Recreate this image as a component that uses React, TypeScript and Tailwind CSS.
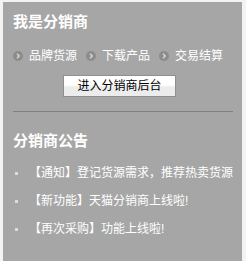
const font = "font-['Liberation_Sans','Noto_Sans_CJK_SC',sans-serif]";

function Arrow() {
  return (
    <svg width="10" height="10" viewBox="0 0 10 10" className="shrink-0">
      <circle cx="5" cy="5" r="5" fill="#8c8c8c" />
      <path d="M4 2.8 L6.2 5 L4 7.2" fill="none" stroke="#d8d8d8" strokeWidth="1.4" />
    </svg>
  );
}

const links = ["品牌货源", "下载产品", "交易结算"];
const notices = [
  ["【通知】", "登记货源需求，推荐热卖货源"],
  ["【新功能】", "天猫分销商上线啦!"],
  ["【再次采购】", "功能上线啦!"],
];

export default function App() {
  return (
    <div className={`h-[261px] w-[246px] overflow-hidden bg-[#f3f3f3] pl-[3px] pt-[2px] ${font}`}>
      <div className="h-[259px] w-[239px] bg-[#a6a6a6] px-[10px] pt-[10px] text-white">
        <h3 className="text-[15px] font-bold leading-[20px]">我是分销商</h3>
        <div className="mt-[16px] flex h-[16px] items-center">
          {links.map((l, i) => (
            <a key={l} className={`flex items-center gap-[6px] text-[12px] leading-[16px] ${i > 0 ? "ml-[9px]" : ""}`}>
              <Arrow />
              {l}
            </a>
          ))}
        </div>
        <div className="mt-[11px] flex justify-center pr-[6px]">
          <button className="h-[22px] w-[113px] border border-[#8f8f8f] bg-[linear-gradient(#ffffff_0%,#ffffff_45%,#ececec_55%,#ececec_100%)] text-[12px] leading-[20px] text-black">
            进入分销商后台
          </button>
        </div>
        <div className="mt-[14px] h-px w-[220px] bg-[#808080]" />
        <h3 className="mt-[19px] text-[15px] font-bold leading-[20px]">分销商公告</h3>
        <ul className="mt-[14px]">
          {notices.map(([tag, text]) => (
            <li key={tag} className="mt-[12px] flex h-[16px] items-center whitespace-nowrap text-[12px] leading-[16px] first:mt-0">
              <span className="ml-[2px] mr-[11px] h-[3px] w-[3px] shrink-0 bg-[#dcdcdc]" />
              <span>{tag}</span>
              <span>{text}</span>
            </li>
          ))}
        </ul>
      </div>
    </div>
  );
}
